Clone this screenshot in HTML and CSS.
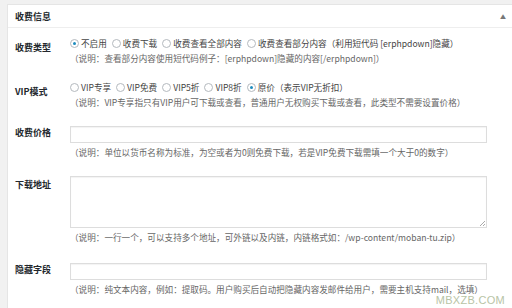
FILE: index.html
```
<!DOCTYPE html>
<html>
    <head>
        <title>收费信息</title>
        <link rel="stylesheet" href="styles.css">
    </head>
    <body>
        <div class="postbox">
            <div class="box_head">
                <h2>收费信息</h2>
                <span class="toggle">&#9650;</span>
            </div>
            <div class="box_inside">
                <div class="row">
                    <div class="label">收费类型</div>
                    <div class="field">
                        <div class="radios">
                            <span class="radio checked"><i></i>不启用</span>
                            <span class="radio"><i></i>收费下载</span>
                            <span class="radio"><i></i>收费查看全部内容</span>
                            <span class="radio"><i></i>收费查看部分内容（利用短代码 [erphpdown]隐藏）</span>
                        </div>
                        <p class="desc">（说明：查看部分内容使用短代码例子：[erphpdown]隐藏的内容[/erphpdown]）</p>
                    </div>
                </div>
                <div class="row">
                    <div class="label">VIP模式</div>
                    <div class="field">
                        <div class="radios">
                            <span class="radio"><i></i>VIP专享</span>
                            <span class="radio"><i></i>VIP免费</span>
                            <span class="radio"><i></i>VIP5折</span>
                            <span class="radio"><i></i>VIP8折</span>
                            <span class="radio checked"><i></i>原价（表示VIP无折扣）</span>
                        </div>
                        <p class="desc">（说明：VIP专享指只有VIP用户可下载或查看，普通用户无权购买下载或查看，此类型不需要设置价格）</p>
                    </div>
                </div>
                <div class="row row_input">
                    <div class="label">收费价格</div>
                    <div class="field">
                        <div class="input"></div>
                        <p class="desc">（说明：单位以货币名称为标准，为空或者为0则免费下载，若是VIP免费下载需填一个大于0的数字）</p>
                    </div>
                </div>
                <div class="row row_input">
                    <div class="label label_area">下载地址</div>
                    <div class="field">
                        <div class="input textarea"><span class="grip"></span></div>
                        <p class="desc">（说明：一行一个，可以支持多个地址，可外链以及内链，内链格式如：/wp-content/moban-tu.zip）</p>
                    </div>
                </div>
                <div class="row row_input row_last">
                    <div class="label">隐藏字段</div>
                    <div class="field">
                        <div class="input"></div>
                        <p class="desc">（说明：纯文本内容，例如：提取码。用户购买后自动把隐藏内容发邮件给用户，需要主机支持mail，选填）</p>
                    </div>
                </div>
            </div>
        </div>
        <div class="watermark">MBXZB.COM</div>
    </body>
</html>
```

FILE: styles.css
```
body {
    margin: 0px;
    background: #f1f1f1;
    font-family: "Noto Sans CJK SC", "Liberation Sans", sans-serif;
    height: 308px;
    overflow: hidden;
    position: relative;
}
.postbox {
    margin: 4px 0 0 7px;
    background: #fff;
    border: 1px solid #e5e5e5;
    border-right: 0;
    border-bottom: 0;
    height: 303px;
    overflow: hidden;
}
.box_head {
    height: 22px;
    border-bottom: 1px solid #eee;
    display: flex;
    align-items: center;
    justify-content: space-between;
    padding: 0 6px 0 7px;
}
.box_head h2 {
    margin: 0;
    font-size: 9px;
    font-weight: bold;
    color: #23282d;
}
.toggle {
    font-size: 6px;
    color: #777;
}
.box_inside {
    padding: 8px 0 0 7px;
    display: flex;
    flex-direction: column;
    gap: 15px;
}
.row {
    display: flex;
}
.row_input {
    margin-top: 2px;
}
.row_last {
    margin-top: 4px;
}
.label {
    width: 55px;
    flex: none;
    padding-top: 6px;
    font-size: 9px;
    font-weight: bold;
    color: #23282d;
    line-height: 12px;
}
.row_input .label {
    padding-top: 1px;
}
.row_input .label_area {
    padding-top: 3px;
}
.field {
    flex: 1;
}
.radios {
    display: flex;
    gap: 5px;
    height: 14px;
    align-items: center;
    font-size: 8.6px;
    color: #444;
}
.radio {
    display: flex;
    align-items: center;
    gap: 2px;
    white-space: nowrap;
}
.radio i {
    width: 7px;
    height: 7px;
    border: 1px solid #b4b9be;
    border-radius: 50%;
    display: inline-block;
    position: relative;
    box-sizing: content-box;
}
.radio.checked i::after {
    content: "";
    position: absolute;
    left: 2px;
    top: 2px;
    width: 3px;
    height: 3px;
    border-radius: 50%;
    background: #1e8cbe;
}
.desc {
    margin: 1px 0 0 0;
    font-size: 8.6px;
    line-height: 14px;
    color: #666;
    white-space: nowrap;
}
.input {
    width: 415px;
    height: 15px;
    border: 1px solid #ddd;
    box-shadow: inset 0 1px 1px rgba(0,0,0,0.05);
    margin-bottom: 2px;
}
.textarea {
    height: 50px;
    position: relative;
}
.grip {
    position: absolute;
    right: 1px;
    bottom: 1px;
    width: 5px;
    height: 5px;
    background: linear-gradient(135deg, transparent 45%, #aaa 45%, #aaa 55%, transparent 55%, transparent 75%, #aaa 75%, #aaa 85%, transparent 85%);
}
.watermark {
    position: absolute;
    right: 7px;
    bottom: 2px;
    font-family: "Liberation Sans", sans-serif;
    font-size: 11px;
    color: #b8c4a6;
    letter-spacing: 0.3px;
}
```
